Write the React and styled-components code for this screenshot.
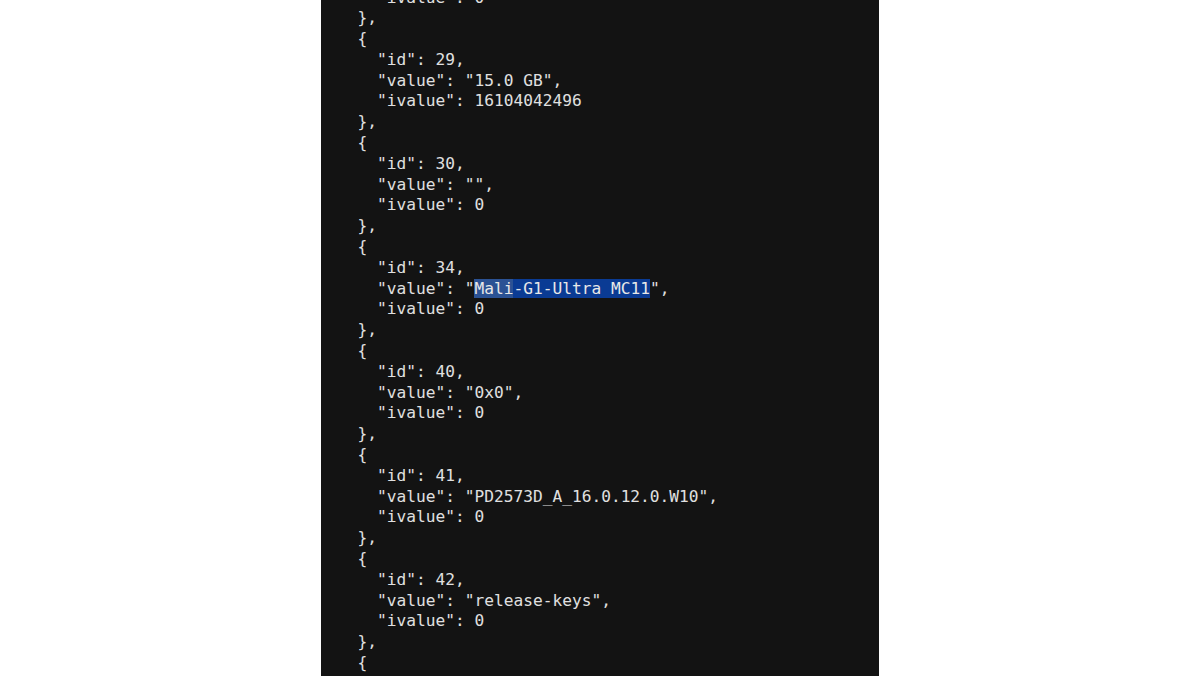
import styled, { createGlobalStyle } from 'styled-components'

const GlobalStyle = createGlobalStyle`
  html, body {
    margin: 0;
    padding: 0;
    background: #ffffff;
    height: 100%;
    overflow: hidden;
  }
`

const entries = [
  { id: 29, value: '"15.0 GB"', ivalue: '16104042496' },
  { id: 30, value: '""', ivalue: '0' },
  { id: 34, value: 'SEL', ivalue: '0' },
  { id: 40, value: '"0x0"', ivalue: '0' },
  { id: 41, value: '"PD2573D_A_16.0.12.0.W10"', ivalue: '0' },
  { id: 42, value: '"release-keys"', ivalue: '0' },
]

function App() {
  return (
    <Page>
      <GlobalStyle />
      <Viewer>
        <Code>
          <Line>{'    "ivalue": 0'}</Line>
          <Line>{'  },'}</Line>
          {entries.map((e) => (
            <div key={e.id}>
              <Line>{'  {'}</Line>
              <Line>{`    "id": ${e.id},`}</Line>
              {e.value === 'SEL' ? (
                <Line>
                  {'    "value": "'}
                  <Sel $light>Mali</Sel>
                  <Sel>-G1-Ultra MC11</Sel>
                  {'",'}
                </Line>
              ) : (
                <Line>{`    "value": ${e.value},`}</Line>
              )}
              <Line>{`    "ivalue": ${e.ivalue}`}</Line>
              <Line>{'  },'}</Line>
            </div>
          ))}
          <Line>{'  {'}</Line>
        </Code>
      </Viewer>
    </Page>
  )
}

export default App

const Page = styled.div`
  width: 1200px;
  height: 676px;
  display: flex;
  justify-content: center;
  background: #ffffff;
`

const Viewer = styled.div`
  width: 558px;
  height: 676px;
  background: #131313;
  overflow: hidden;
`

const Code = styled.pre`
  margin: -12.5px 0 0 0;
  padding: 0 0 0 17px;
  font-family: "DejaVu Sans Mono", "Liberation Mono", monospace;
  font-size: 16.2px;
  line-height: 20.8px;
  color: #e0e0e0;
  white-space: pre;
`

const Line = styled.div`
  height: 20.8px;
`

const Sel = styled.span`
  background: ${p => (p.$light ? '#2b5294' : '#0a3b94')};
  color: #e8e8e8;
`
